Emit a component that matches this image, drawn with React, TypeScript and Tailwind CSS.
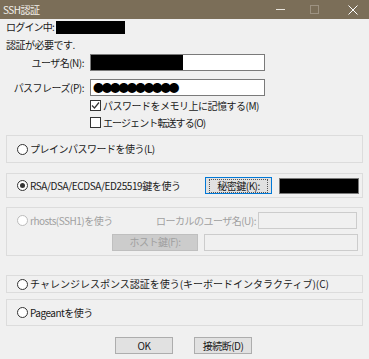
import React from 'react'

const jp = { fontFamily: '"Noto Sans CJK JP", "Noto Sans", sans-serif' }

function Radio({ checked = false, disabled = false }: { checked?: boolean; disabled?: boolean }) {
  return (
    <span
      className={`flex h-[11px] w-[11px] shrink-0 items-center justify-center rounded-full border bg-white ${
        disabled ? 'border-[#bcbcbc]' : 'border-[#333]'
      }`}
    >
      {checked && <span className="h-[5px] w-[5px] rounded-full bg-[#333]" />}
    </span>
  )
}

function Checkbox({ checked = false }: { checked?: boolean }) {
  return (
    <span className="flex h-[11px] w-[11px] shrink-0 items-center justify-center border border-[#333] bg-white">
      {checked && (
        <svg width="9" height="9" viewBox="0 0 9 9">
          <path d="M1 4.5 L3.5 7 L8 1.5" fill="none" stroke="#333" strokeWidth="1.2" />
        </svg>
      )}
    </span>
  )
}

function Group({ children, className = '' }: { children: React.ReactNode; className?: string }) {
  return <div className={`mx-[6px] border border-[#dcdcdc] bg-[#f0f0f0] ${className}`}>{children}</div>
}

export default function App() {
  return (
    <div
      className="h-[359px] w-[369px] overflow-hidden bg-[#f0f0f0] text-[10px] leading-none tracking-[-0.5px] text-[#1a1a1a]"
      style={jp}
    >
      {/* title bar */}
      <div className="flex h-[19px] items-center bg-[#7b6e58] text-[#f4f1ec]">
        <span className="pl-[3px]">SSH認証</span>
        <div className="ml-auto flex h-full items-center">
          <span className="mr-[25px] h-px w-[9px] bg-[#e8e4dc]" />
          <span className="mr-[29px] h-[9px] w-[9px] border border-[#9d9281]" />
          <svg width="10" height="10" viewBox="0 0 10 10" className="mr-[11px]">
            <path d="M0.5 0.5 L9.5 9.5 M9.5 0.5 L0.5 9.5" stroke="#fff" strokeWidth="1" />
          </svg>
        </div>
      </div>

      <div className="flex h-[15px] items-end pl-[6px]">
        <span className="pb-[2px] tracking-[-0.8px]">ログイン中:</span>
        <span className="ml-[2px] h-[13px] w-[69px] bg-black" />
      </div>
      <div className="mt-[5px] flex h-[12px] items-center pl-[6px]">認証が必要です.</div>

      <div className="mt-[3px] flex h-[17px] items-center">
        <span className="w-[84px] text-right">ユーザ名(N):</span>
        <div className="ml-[6px] flex h-[17px] w-[175px] border border-[#7a7a7a] bg-white">
          <span className="h-full w-[92px] bg-black" />
        </div>
      </div>
      <div className="mt-[8px] flex h-[17px] items-center">
        <span className="w-[84px] text-right">パスフレーズ(P):</span>
        <div className="ml-[6px] flex h-[17px] w-[175px] items-center overflow-hidden border border-[#7a7a7a] bg-white pl-[2px] text-[11px] tracking-[-2.6px] text-black">
          ●●●●●●●●●●
        </div>
      </div>
      <div className="mt-[4px] flex h-[11px] items-center gap-[2px] pl-[90px]">
        <Checkbox checked />
        <span>パスワードをメモリ上に記憶する(M)</span>
      </div>
      <div className="mt-[6px] flex h-[11px] items-center gap-[2px] pl-[90px]">
        <Checkbox />
        <span className="tracking-[-0.9px]">エージェント転送する(O)</span>
      </div>

      <Group className="mt-[7px] flex h-[28px] items-center pl-[10px]">
        <Radio />
        <span className="ml-[2px]">プレインパスワードを使う(L)</span>
      </Group>

      <Group className="mt-[10px] flex h-[25px] items-center pl-[10px]">
        <Radio checked />
        <span className="ml-[2px] tracking-[-0.4px]">RSA/DSA/ECDSA/ED25519鍵を使う</span>
        <button className="ml-auto flex h-[17px] w-[67px] items-center justify-center border border-[#0078d7] bg-[#e1e1e1]">
          <span className="border border-dotted border-[#555] px-[7px] py-px">秘密鍵(K):</span>
        </button>
        <span className="ml-[7px] mr-[3px] h-[16px] w-[80px] border border-[#7a7a7a] bg-black" />
      </Group>

      <Group className="mt-[9px] h-[49px] text-[#a0a0a0]">
        <div className="flex h-[23px] items-center pl-[10px] pt-[2px]">
          <Radio disabled />
          <span className="ml-[2px]">rhosts(SSH1)を使う</span>
          <span className="ml-auto">ローカルのユーザ名(U):</span>
          <span className="ml-[2px] mr-[5px] h-[17px] w-[99px] border border-[#cccccc] bg-[#f0f0f0]" />
        </div>
        <div className="flex h-[22px] items-center justify-end">
          <span className="flex h-[17px] w-[86px] items-center justify-center border border-[#bfbfbf] bg-[#cccccc]">
            ホスト鍵(F):
          </span>
          <span className="ml-[6px] mr-[4px] h-[17px] w-[154px] border border-[#cccccc] bg-[#f0f0f0]" />
        </div>
      </Group>

      <Group className="mt-[19px] flex h-[18px] items-center pl-[10px]">
        <Radio />
        <span className="ml-[2px] tracking-normal">チャレンジレスポンス認証を使う(キーボードインタラクティブ)(C)</span>
      </Group>

      <Group className="mt-[6px] flex h-[27px] items-center pl-[10px]">
        <Radio />
        <span className="ml-[2px]">Pageantを使う</span>
      </Group>

      <div className="mt-[11px] flex justify-center gap-[21px] pr-[2px]">
        <button className="flex h-[17px] w-[58px] items-center justify-center border border-[#adadad] bg-[#e1e1e1]">OK</button>
        <button className="flex h-[17px] w-[58px] items-center justify-center border border-[#adadad] bg-[#e1e1e1]">
          接続断(D)
        </button>
      </div>
    </div>
  )
}
